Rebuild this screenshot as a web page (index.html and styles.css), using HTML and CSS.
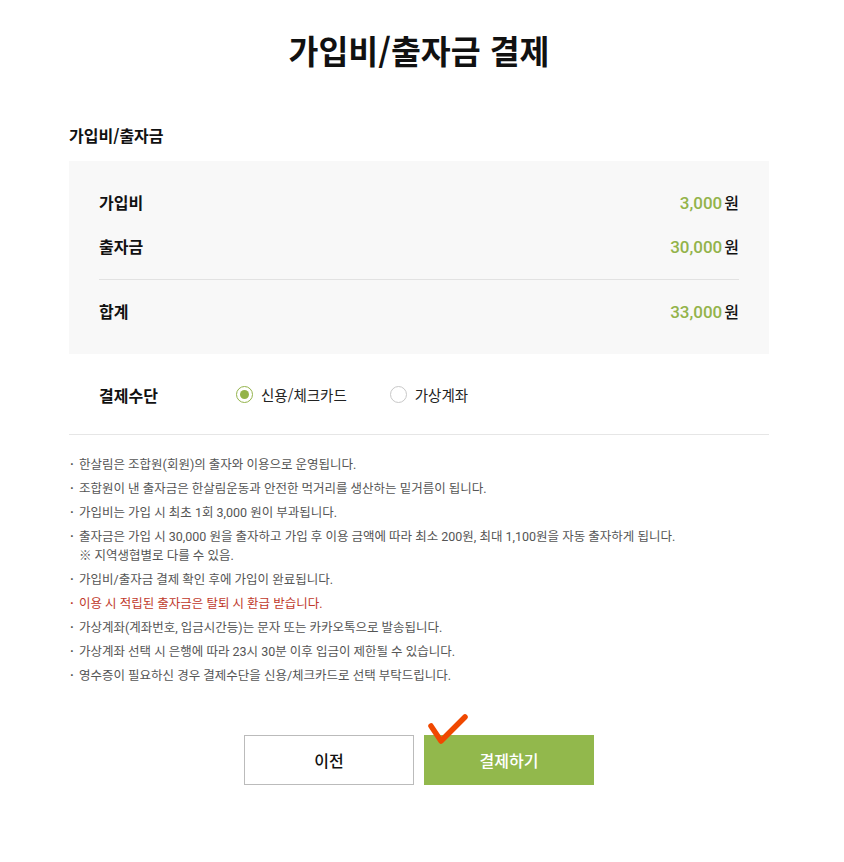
FILE: index.html
```html
<!DOCTYPE html>
<html lang="ko">
<head>
<meta charset="utf-8">
<link rel="stylesheet" href="styles.css">
</head>
<body>
<div class="page">
  <h1 class="title">가입비/출자금 결제</h1>
  <h2 class="section-label">가입비/출자금</h2>
  <div class="summary">
    <div class="row">
      <span class="row-label">가입비</span>
      <span class="amount"><span class="num">3,000</span><span class="won">원</span></span>
    </div>
    <div class="row">
      <span class="row-label">출자금</span>
      <span class="amount"><span class="num">30,000</span><span class="won">원</span></span>
    </div>
    <div class="divider"></div>
    <div class="row total">
      <span class="row-label">합계</span>
      <span class="amount"><span class="num">33,000</span><span class="won">원</span></span>
    </div>
  </div>
  <div class="method">
    <span class="method-label">결제수단</span>
    <label class="radio checked"><span class="dot"></span>신용/체크카드</label>
    <label class="radio"><span class="dot"></span>가상계좌</label>
  </div>
  <ul class="notes">
    <li>한살림은 조합원(회원)의 출자와 이용으로 운영됩니다.</li>
    <li>조합원이 낸 출자금은 한살림운동과 안전한 먹거리를 생산하는 밑거름이 됩니다.</li>
    <li>가입비는 가입 시 최초 1회 3,000 원이 부과됩니다.</li>
    <li>출자금은 가입 시 30,000 원을 출자하고 가입 후 이용 금액에 따라 최소 200원, 최대 1,100원을 자동 출자하게 됩니다.<br>※ 지역생협별로 다를 수 있음.</li>
    <li>가입비/출자금 결제 확인 후에 가입이 완료됩니다.</li>
    <li class="red">이용 시 적립된 출자금은 탈퇴 시 환급 받습니다.</li>
    <li>가상계좌(계좌번호, 입금시간등)는 문자 또는 카카오톡으로 발송됩니다.</li>
    <li>가상계좌 선택 시 은행에 따라 23시 30분 이후 입금이 제한될 수 있습니다.</li>
    <li>영수증이 필요하신 경우 결제수단을 신용/체크카드로 선택 부탁드립니다.</li>
  </ul>
  <div class="buttons">
    <button class="btn prev">이전</button>
    <button class="btn pay">결제하기
      <svg class="check" width="46" height="36" viewBox="0 0 46 36"><path d="M6 14 L16 29 L40 5" fill="none" stroke="#f04800" stroke-width="5.5" stroke-linecap="round" stroke-linejoin="round"/></svg>
    </button>
  </div>
</div>
</body>
</html>
```
FILE: styles.css
```css
* { box-sizing: border-box; }
body {
  margin: 0;
  padding-right: 6px;
  background: #fff;
  font-family: "Noto Sans CJK KR", "Noto Sans", sans-serif;
  color: #111;
}
.page {
  width: 700px;
  margin: 0 auto;
  padding-top: 26px;
}
.title {
  margin: 0;
  text-align: center;
  font-size: 32.5px;
  font-weight: 700;
  line-height: 48px;
  color: #111;
}
.section-label {
  margin: 50px 0 0;
  font-size: 16px;
  font-weight: 700;
  line-height: 22px;
}
.summary {
  margin-top: 15px;
  background: #f8f8f8;
  padding: 27px 30px 29px;
}
.row {
  display: flex;
  justify-content: space-between;
  align-items: center;
  height: 28px;
}
.row + .row { margin-top: 16px; }
.row-label {
  font-size: 16px;
  font-weight: 700;
}
.amount { display: flex; align-items: baseline; }
.num {
  font-family: Roboto, sans-serif;
  font-size: 17px;
  font-weight: 500;
  color: #93b34a;
}
.won {
  font-size: 16px;
  font-weight: 500;
  margin-left: 2px;
}
.divider {
  height: 1px;
  background: #e2e2e2;
  margin: 19px 0 17px;
}
.method {
  display: flex;
  align-items: center;
  height: 81px;
  padding-left: 30px;
  padding-top: 1px;
  border-bottom: 1px solid #e6e6e6;
}
.method-label {
  font-size: 16px;
  font-weight: 700;
  width: 137px;
}
.radio {
  display: flex;
  align-items: center;
  font-size: 14.5px;
  color: #222;
  margin-right: 43px;
}
.dot {
  width: 17px;
  height: 17px;
  border: 1px solid #c8c8c8;
  border-radius: 50%;
  background: #fff;
  margin-right: 8px;
  position: relative;
}
.radio.checked .dot { border-color: #93b34a; }
.radio.checked .dot::after {
  content: "";
  position: absolute;
  left: 3px; top: 3px;
  width: 9px; height: 9px;
  border-radius: 50%;
  background: #93b34a;
}
.notes {
  list-style: none;
  margin: 20px 0 0;
  padding: 0;
  font-family: Roboto, "Noto Sans CJK KR", sans-serif;
  font-size: 12.5px;
  line-height: 19px;
  color: #555;
}
.notes li {
  position: relative;
  padding-left: 10px;
}
.notes li + li { margin-top: 5px; }
.notes li::before {
  content: "·";
  position: absolute;
  left: 1px;
  top: 0;
  font-weight: 700;
}
.notes li.red { color: #c0392b; }
.buttons {
  display: flex;
  justify-content: center;
  gap: 10px;
  margin-top: 50px;
}
.btn {
  width: 170px;
  height: 50px;
  font-family: "Noto Sans CJK KR", sans-serif;
  font-size: 16px;
  font-weight: 500;
  cursor: pointer;
  position: relative;
}
.btn.prev {
  background: #fff;
  border: 1px solid #bbb;
  color: #111;
}
.btn.pay {
  background: #92b84c;
  border: 1px solid #92b84c;
  color: #fff;
}
.check {
  position: absolute;
  left: 0;
  top: -24px;
}
```
